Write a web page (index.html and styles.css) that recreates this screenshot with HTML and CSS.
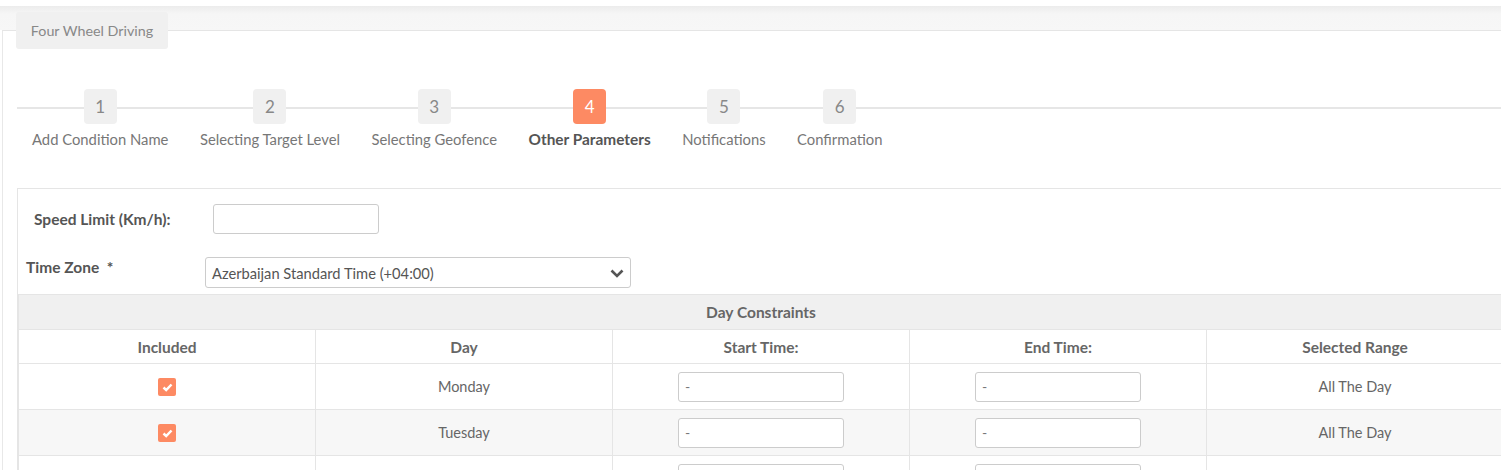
FILE: index.html
```html
<!DOCTYPE html>
<html lang="en">
<head>
  <meta charset="UTF-8" />
  <meta name="viewport" content="width=device-width, initial-scale=1" />
  <title>Four Wheel Driving</title>
  <link rel="stylesheet" href="styles.css">
</head>
<body>
  <div class="topbar"></div>

  <div class="page">
    <div class="tab">Four Wheel Driving</div>

    <div class="stepper">
      <div class="step">
        <div class="step-num">1</div>
        <div class="step-label">Add Condition Name</div>
      </div>
      <div class="step">
        <div class="step-num">2</div>
        <div class="step-label">Selecting Target Level</div>
      </div>
      <div class="step">
        <div class="step-num">3</div>
        <div class="step-label">Selecting Geofence</div>
      </div>
      <div class="step active">
        <div class="step-num">4</div>
        <div class="step-label">Other Parameters</div>
      </div>
      <div class="step">
        <div class="step-num">5</div>
        <div class="step-label">Notifications</div>
      </div>
      <div class="step">
        <div class="step-num">6</div>
        <div class="step-label">Confirmation</div>
      </div>
    </div>

    <div class="form-panel">
      <div class="form-row speed-row">
        <label class="form-label">Speed Limit (Km/h):</label>
        <input class="text-input" type="text" />
      </div>

      <div class="form-row zone-row">
        <label class="form-label">Time Zone &nbsp;*</label>
        <div class="select">
          <span>Azerbaijan Standard Time (+04:00)</span>
          <svg class="chevron" width="14" height="10" viewBox="0 0 14 10">
            <path d="M1.5 2.5 L7 8 L12.5 2.5" fill="none" stroke="#555" stroke-width="2.6" />
          </svg>
        </div>
      </div>

      <table class="days">
        <thead>
          <tr class="title-row">
            <th colspan="5">Day Constraints</th>
          </tr>
          <tr class="head-row">
            <th>Included</th>
            <th>Day</th>
            <th>Start Time:</th>
            <th>End Time:</th>
            <th>Selected Range</th>
          </tr>
        </thead>
        <tbody id="dayRows"></tbody>
      </table>
    </div>
  </div>

  <script>
    const days = ["Monday", "Tuesday", "Wednesday", "Thursday", "Friday", "Saturday", "Sunday"];
    const rows = document.getElementById("dayRows");

    days.forEach(day => {
      const tr = document.createElement("tr");
      tr.innerHTML = `
        <td><span class="check"><svg width="11" height="9" viewBox="0 0 11 9"><path d="M1.5 4.5 L4.2 7 L9.5 1.5" fill="none" stroke="#fff" stroke-width="2.5"/></svg></span></td>
        <td>${day}</td>
        <td><input class="text-input" type="text" value="-" /></td>
        <td><input class="text-input" type="text" value="-" /></td>
        <td>All The Day</td>`;
      rows.appendChild(tr);
    });
  </script>
</body>
</html>
```

FILE: styles.css
```css
body {
  margin: 0;
  font-family: Lato, "Open Sans", sans-serif;
  font-size: 14.5px;
  color: #666;
  background: #fff;
  overflow: hidden;
}

.topbar {
  margin-top: 6px;
  height: 24px;
  background: linear-gradient(#ececec, #f6f6f6 8px, #f7f7f7);
}

.page {
  position: relative;
  margin-left: 2px;
  width: 1540px;
  border-top: 1px solid #e5e5e5;
  border-left: 1px solid #e8e8e8;
  padding-top: 58px;
  padding-bottom: 40px;
}

.tab {
  position: absolute;
  top: -19px;
  left: 13px;
  width: 152px;
  height: 37px;
  line-height: 37px;
  text-align: center;
  background: #f0f0f0;
  border-radius: 3px;
  color: #888;
  font-size: 14.3px;
}

.stepper {
  position: relative;
  display: flex;
  gap: 31.5px;
  margin-left: 14px;
  padding-left: 15px;
}

.stepper::before {
  content: "";
  position: absolute;
  left: 0;
  right: 0;
  top: 18px;
  height: 2px;
  background: #e6e6e6;
}

.step {
  position: relative;
  display: flex;
  flex-direction: column;
  align-items: center;
}

.step-num {
  width: 33px;
  height: 35px;
  line-height: 35px;
  text-align: center;
  background: #f0f0f0;
  border-radius: 4px;
  color: #888;
  font-size: 17px;
}

.step-label {
  margin-top: 5px;
  line-height: 20px;
  font-size: 14.8px;
  color: #777;
  white-space: nowrap;
}

.step.active .step-num {
  background: #fd8a63;
  color: #fff;
}

.step.active .step-label {
  font-weight: bold;
  font-size: 15.4px;
  color: #555;
}

.form-panel {
  margin-top: 39px;
  margin-left: 14px;
  border-top: 1px solid #e5e5e5;
  border-left: 1px solid #e5e5e5;
  padding-top: 15px;
}

.form-row {
  display: flex;
}

.form-label {
  font-weight: bold;
  color: #555;
  font-size: 15.5px;
}

.speed-row {
  align-items: center;
  padding-left: 16px;
}

.speed-row .form-label {
  width: 179px;
}

.zone-row {
  margin-top: 23px;
  padding-left: 8px;
}

.zone-row .form-label {
  width: 179px;
  line-height: 20px;
}

.text-input {
  box-sizing: border-box;
  width: 166px;
  height: 30px;
  border: 1px solid #ccc;
  border-radius: 3px;
  padding: 0 6px;
  font-family: inherit;
  font-size: 14px;
  color: #777;
  background: #fff;
}

.select {
  box-sizing: border-box;
  width: 426px;
  height: 31px;
  border: 1px solid #ccc;
  border-radius: 3px;
  display: flex;
  align-items: center;
  justify-content: space-between;
  padding: 0 6px 0 6px;
  color: #555;
  font-size: 14.7px;
}

.days {
  margin-top: 6px;
  width: 1486px;
  table-layout: fixed;
  border-collapse: collapse;
}

.days th,
.days td {
  border: 1px solid #e5e5e5;
  text-align: center;
  padding: 0;
}

.days th {
  font-size: 15.5px;
}

.title-row th {
  height: 34px;
  background: #f0f0f0;
  font-weight: bold;
  color: #666;
}

.head-row th {
  height: 33px;
  font-weight: bold;
  color: #666;
}

.days td {
  height: 45px;
  color: #666;
}

.days tbody tr:nth-child(even) td {
  background: #f7f7f7;
}

.check {
  display: inline-flex;
  align-items: center;
  justify-content: center;
  width: 18px;
  height: 18px;
  background: #fd8a63;
  border-radius: 2px;
  vertical-align: middle;
}
```
